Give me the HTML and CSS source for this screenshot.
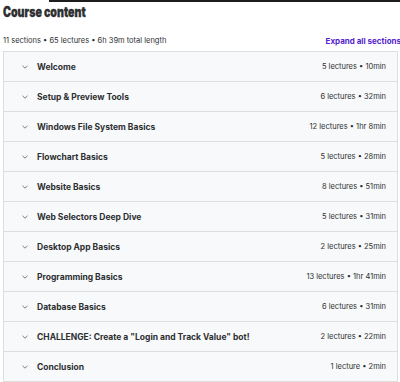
FILE: index.html
```html
<!DOCTYPE html>
<html lang="en">
<head>
    <meta charset="UTF-8">
    <meta name="viewport" content="width=device-width, initial-scale=1.0">
    <title>Course content</title>
    <link rel="stylesheet" href="styles.css">
</head>
<body>
    <div class="topbar"></div>
    <div class="container">
        <h2 class="header">Course content</h2>
        <div class="stats">
            <span>11 sections • 65 lectures • 6h 39m total length</span>
            <span class="expand">Expand all sections</span>
        </div>
        <div class="sections">
            <div class="section"><span class="chev"><svg width="6" height="4" viewBox="0 0 6 4"><path d="M0.5 0.8 L3 3.2 L5.5 0.8" fill="none" stroke="#6a6f73" stroke-width="0.9"/></svg></span><span class="title">Welcome</span><span class="meta">5 lectures • 10min</span></div>
            <div class="section"><span class="chev"><svg width="6" height="4" viewBox="0 0 6 4"><path d="M0.5 0.8 L3 3.2 L5.5 0.8" fill="none" stroke="#6a6f73" stroke-width="0.9"/></svg></span><span class="title">Setup &amp; Preview Tools</span><span class="meta">6 lectures • 32min</span></div>
            <div class="section"><span class="chev"><svg width="6" height="4" viewBox="0 0 6 4"><path d="M0.5 0.8 L3 3.2 L5.5 0.8" fill="none" stroke="#6a6f73" stroke-width="0.9"/></svg></span><span class="title">Windows File System Basics</span><span class="meta">12 lectures • 1hr 8min</span></div>
            <div class="section"><span class="chev"><svg width="6" height="4" viewBox="0 0 6 4"><path d="M0.5 0.8 L3 3.2 L5.5 0.8" fill="none" stroke="#6a6f73" stroke-width="0.9"/></svg></span><span class="title">Flowchart Basics</span><span class="meta">5 lectures • 28min</span></div>
            <div class="section"><span class="chev"><svg width="6" height="4" viewBox="0 0 6 4"><path d="M0.5 0.8 L3 3.2 L5.5 0.8" fill="none" stroke="#6a6f73" stroke-width="0.9"/></svg></span><span class="title">Website Basics</span><span class="meta">8 lectures • 51min</span></div>
            <div class="section"><span class="chev"><svg width="6" height="4" viewBox="0 0 6 4"><path d="M0.5 0.8 L3 3.2 L5.5 0.8" fill="none" stroke="#6a6f73" stroke-width="0.9"/></svg></span><span class="title">Web Selectors Deep Dive</span><span class="meta">5 lectures • 31min</span></div>
            <div class="section"><span class="chev"><svg width="6" height="4" viewBox="0 0 6 4"><path d="M0.5 0.8 L3 3.2 L5.5 0.8" fill="none" stroke="#6a6f73" stroke-width="0.9"/></svg></span><span class="title">Desktop App Basics</span><span class="meta">2 lectures • 25min</span></div>
            <div class="section"><span class="chev"><svg width="6" height="4" viewBox="0 0 6 4"><path d="M0.5 0.8 L3 3.2 L5.5 0.8" fill="none" stroke="#6a6f73" stroke-width="0.9"/></svg></span><span class="title">Programming Basics</span><span class="meta">13 lectures • 1hr 41min</span></div>
            <div class="section"><span class="chev"><svg width="6" height="4" viewBox="0 0 6 4"><path d="M0.5 0.8 L3 3.2 L5.5 0.8" fill="none" stroke="#6a6f73" stroke-width="0.9"/></svg></span><span class="title">Database Basics</span><span class="meta">6 lectures • 31min</span></div>
            <div class="section"><span class="chev"><svg width="6" height="4" viewBox="0 0 6 4"><path d="M0.5 0.8 L3 3.2 L5.5 0.8" fill="none" stroke="#6a6f73" stroke-width="0.9"/></svg></span><span class="title">CHALLENGE: Create a "Login and Track Value" bot!</span><span class="meta">2 lectures • 22min</span></div>
            <div class="section"><span class="chev"><svg width="6" height="4" viewBox="0 0 6 4"><path d="M0.5 0.8 L3 3.2 L5.5 0.8" fill="none" stroke="#6a6f73" stroke-width="0.9"/></svg></span><span class="title">Conclusion</span><span class="meta">1 lecture • 2min</span></div>
        </div>
    </div>
</body>
</html>
```

FILE: styles.css
```css
body {
    margin: 0;
    font-family: Inter, "Noto Sans", sans-serif;
    background: #ffffff;
    color: #2d2f31;
}

.topbar {
    height: 2px;
    margin-left: 49px;
    background: #1c1d1f;
}

.container {
    padding-left: 3px;
    padding-right: 2px;
}

.header {
    margin: 0;
    padding-top: 1px;
    font-size: 14px;
    font-weight: 900;
    line-height: 18px;
    -webkit-text-stroke: 0.3px #2d2f31;
    transform: scaleX(0.76);
    transform-origin: left center;
}

.stats {
    display: flex;
    justify-content: space-between;
    align-items: center;
    margin-top: 9px;
    height: 21px;
    font-size: 7.5px;
    color: #2d2f31;
}

.expand {
    color: #5624d0;
    font-weight: 700;
    font-size: 8px;
    margin-right: -3px;
}

.sections {
    border: 1px solid #dcdfe2;
    border-bottom: none;
}

.section {
    display: flex;
    align-items: center;
    height: 29px;
    background: #f7f9fa;
    border-bottom: 1px solid #dcdfe2;
    padding: 0 11px 0 18px;
}

.chev {
    width: 15px;
    display: flex;
    align-items: center;
}

.title {
    flex: 1;
    font-size: 8.5px;
    font-weight: 700;
    color: #2d2f31;
}

.meta {
    font-size: 7.5px;
    color: #2d2f31;
}
```
